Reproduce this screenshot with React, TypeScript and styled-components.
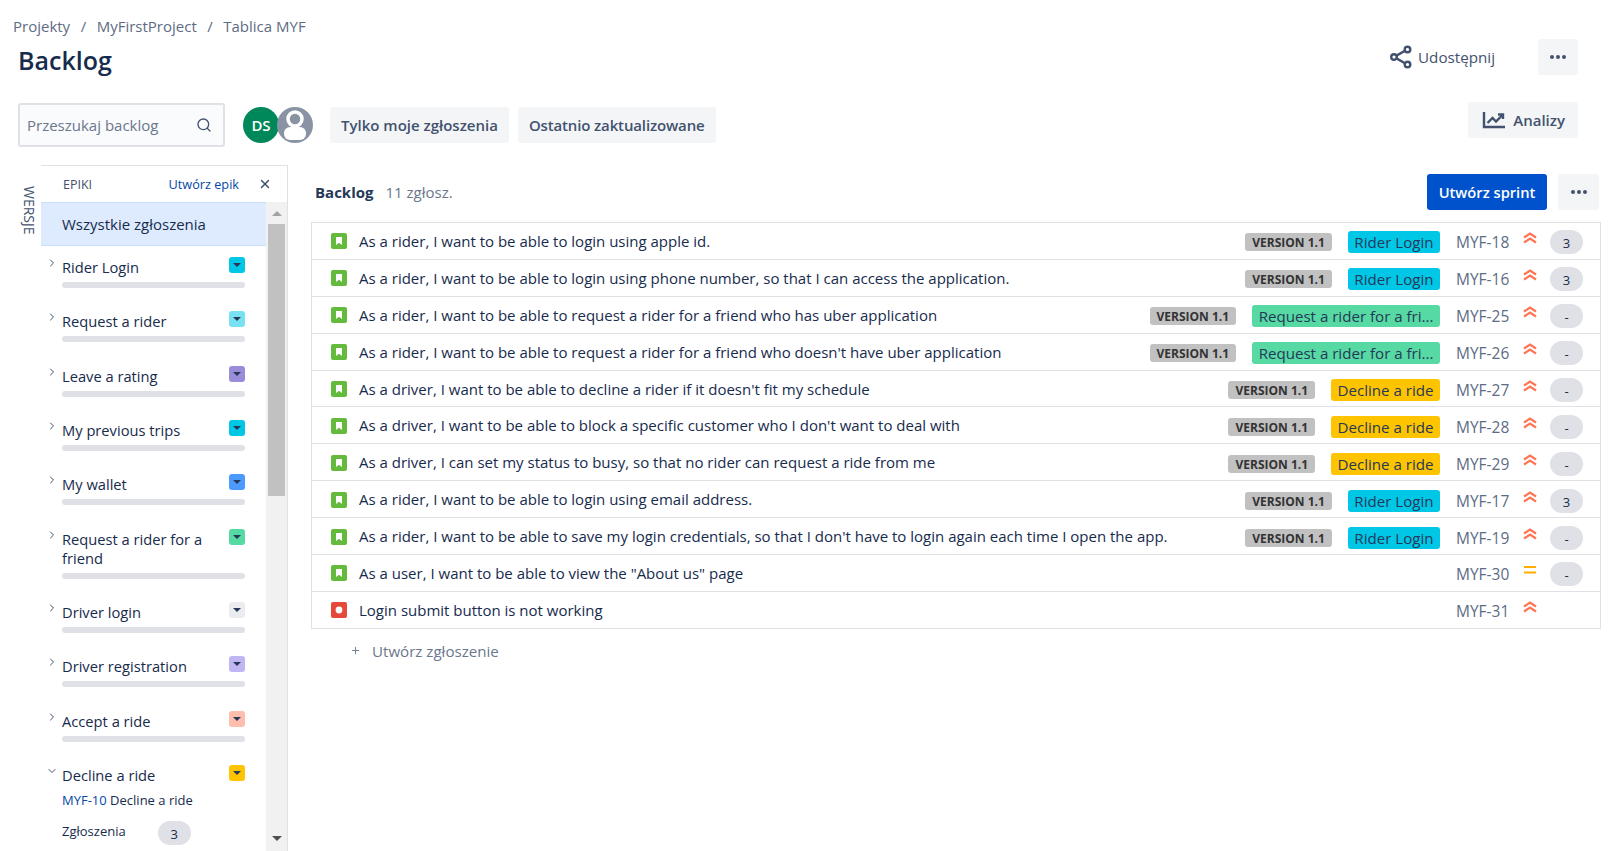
import React from "react"
import styled, { createGlobalStyle } from "styled-components"
import { Search, ChevronRight, ChevronDown, X, Plus } from "lucide-react"

const GlobalStyle = createGlobalStyle`
  html, body {
    margin: 0;
    height: 851px;
    overflow: hidden;
    background: #fff;
    font-family: "Open Sans", "Noto Sans", sans-serif;
    color: #172b4d;
  }
  * { box-sizing: border-box; }
`

const Page = styled.div`
  width: 1612px;
  height: 851px;
  overflow: hidden;
`

const TopBar = styled.header`
  display: flex;
  justify-content: space-between;
  height: 102px;
  padding: 15px 34px 0 13px;
`

const Breadcrumbs = styled.nav`
  display: flex;
  gap: 10.5px;
  font-size: 15px;
  line-height: 22px;
  color: #5e6c84;
`

const Title = styled.h1`
  margin: 7px 0 0 5px;
  font-size: 25px;
  line-height: 32px;
  font-weight: 600;
  color: #172b4d;
`

const TopActions = styled.div`
  display: flex;
  align-items: center;
  gap: 43px;
  height: 36px;
  margin-top: 24px;
`

const ShareLink = styled.span`
  display: flex;
  align-items: center;
  gap: 5px;
  font-size: 15.2px;
  font-weight: 500;
  color: #42526e;
`

const MoreButton = styled.button<{ $width: number }>`
  display: flex;
  align-items: center;
  justify-content: center;
  width: ${p => p.$width}px;
  height: 36px;
  padding: 0;
  border: 0;
  border-radius: 3px;
  background: #f4f5f7;
  color: #42526e;
`

const ToolRow = styled.div`
  display: flex;
  align-items: flex-start;
  height: 63px;
  padding: 0 34px 0 18px;
`

const SearchBox = styled.div`
  display: flex;
  align-items: center;
  justify-content: space-between;
  width: 207px;
  height: 44px;
  margin-top: 1px;
  padding: 0 11px 0 7px;
  border: 2px solid #dfe1e6;
  border-radius: 3px;
  background: #fafbfc;
  font-size: 15px;
  color: #6b778c;
`

const Avatars = styled.div`
  display: flex;
  margin: 5px 0 0 18px;
`

const Avatar = styled.div`
  display: flex;
  align-items: center;
  justify-content: center;
  width: 36px;
  height: 36px;
  border-radius: 50%;
  background: #00875a;
  color: #fff;
  font-size: 15px;
  font-weight: 600;
`

const GhostAvatar = styled.svg`
  width: 36px;
  height: 36px;
  margin-left: -2px;
`

const Filter = styled.button<{ $tight?: boolean }>`
  height: 36px;
  margin: 5px 0 0 9px;
  padding: 0 11px;
  border: 0;
  border-radius: 3px;
  background: #f4f5f7;
  font-family: inherit;
  font-size: 15px;
  font-weight: 600;
  letter-spacing: ${p => (p.$tight ? "-0.14px" : "0")};
  color: #42526e;
  &:first-of-type { margin-left: 17px; }
`

const AnalyticsButton = styled.button`
  display: flex;
  align-items: center;
  gap: 7px;
  height: 36px;
  margin-left: auto;
  padding: 0 13px 0 14px;
  border: 0;
  border-radius: 3px;
  background: #f4f5f7;
  font-family: inherit;
  font-size: 15px;
  font-weight: 600;
  color: #42526e;
`

const Main = styled.main`
  display: flex;
  height: 686px;
`

const VersionsTab = styled.div`
  width: 41px;
  padding: 21px 4px 0 0;
  writing-mode: vertical-rl;
  font-size: 14px;
  line-height: 16px;
  font-weight: 500;
  color: #42526e;
`

const EpicPanel = styled.aside`
  display: flex;
  flex-direction: column;
  width: 247px;
  border-top: 1px solid #dfe1e6;
  border-right: 1px solid #dfe1e6;
`

const EpicHeader = styled.div`
  display: flex;
  align-items: center;
  height: 36px;
  padding: 0 15px 0 22px;
  font-size: 12.5px;
  font-weight: 500;
  color: #42526e;
`

const CreateEpic = styled.span`
  margin-left: auto;
  margin-right: 19px;
  font-size: 12.7px;
  font-weight: 400;
  color: #0747a6;
`

const EpicBody = styled.div`
  display: flex;
  flex: 1;
  min-height: 0;
`

const EpicList = styled.div`
  width: 225px;
  overflow: hidden;
`

const AllIssues = styled.div`
  display: flex;
  align-items: center;
  height: 44px;
  padding-left: 21px;
  background: #deebff;
  border-top: 1px solid #c9dcf8;
  border-bottom: 1px solid #c9dcf8;
  font-size: 15px;
  color: #172b4d;
`

const EpicItem = styled.div`
  position: relative;
  padding: 11px 21px 12.33px 21px;
`

const Caret = styled.span`
  position: absolute;
  left: 5px;
  top: 6px;
  color: #42526e;
`

const EpicTop = styled.div`
  display: flex;
  justify-content: space-between;
  align-items: flex-start;
  gap: 16px;
  font-size: 14.7px;
  line-height: 19px;
`

const EpicName = styled.span`
  margin-top: 1px;
`

const Swatch = styled.span<{ $color: string }>`
  display: flex;
  flex: none;
  align-items: center;
  justify-content: center;
  width: 16px;
  height: 16px;
  border-radius: 3px;
  background: ${p => p.$color};
  &::after {
    content: "";
    border-left: 4px solid transparent;
    border-right: 4px solid transparent;
    border-top: 4px solid #253858;
  }
`

const ProgressBar = styled.div`
  height: 6px;
  margin-top: 5px;
  border-radius: 3px;
  background: #dfe1e6;
`

const EpicDetail = styled.div`
  margin-top: 5px;
  font-size: 13px;
  line-height: 20px;
  color: #172b4d;
`

const EpicKey = styled.span`
  color: #0747a6;
`

const DetailRow = styled.div`
  display: flex;
  align-items: center;
  gap: 20px;
  margin-top: 8px;
  font-size: 13px;
`

const Scrollbar = styled.div`
  display: flex;
  flex-direction: column;
  align-items: center;
  width: 21px;
  background: #f1f1f1;
`

const ScrollArrow = styled.span<{ $down?: boolean }>`
  flex: none;
  width: 0;
  margin: ${p => (p.$down ? "auto 0 10px" : "9px 0 8px")};
  border-left: 5px solid transparent;
  border-right: 5px solid transparent;
  ${p => (p.$down ? "border-top: 5px solid #505050;" : "border-bottom: 5px solid #a3a3a3;")}
`

const ScrollThumb = styled.div`
  width: 17px;
  height: 272px;
  background: #c1c1c1;
`

const Content = styled.section`
  flex: 1;
  padding: 9px 11px 0 23px;
`

const SprintHeader = styled.div`
  display: flex;
  align-items: center;
  height: 36px;
  padding: 0 2px 0 4px;
`

const SprintName = styled.strong`
  font-size: 15px;
  font-weight: 700;
  color: #253858;
`

const IssueCount = styled.span`
  margin-left: 12px;
  font-size: 15px;
  color: #6b778c;
`

const PrimaryButton = styled.button`
  width: 120px;
  height: 36px;
  margin-left: auto;
  margin-right: 11px;
  padding: 0;
  border: 0;
  border-radius: 3px;
  background: #0052cc;
  font-family: inherit;
  font-size: 14.7px;
  font-weight: 600;
  color: #fff;
`

const IssueTable = styled.div`
  margin-top: 12px;
  border: 1px solid #dfe1e6;
`

const Row = styled.div`
  display: flex;
  align-items: center;
  height: 36.9px;
  padding: 0 17px 0 19px;
  border-bottom: 1px solid #dfe1e6;
  &:last-child { border-bottom: 0; height: 36px; }
`

const TypeIcon = styled.svg`
  flex: none;
  width: 16px;
  height: 16px;
  margin-top: 1px;
`

const Summary = styled.span`
  flex: 1;
  margin: 0 0 0 12px;
  font-size: 15px;
  color: #172b4d;
  white-space: nowrap;
`

const VersionBadge = styled.span`
  flex: none;
  height: 18px;
  margin: 3px 16px 0 0;
  padding: 0 7px;
  border-radius: 3px;
  background: #c1c1c1;
  font-size: 12px;
  line-height: 19px;
  font-weight: 700;
  color: #333;
`

const EpicLabel = styled.span<{ $color: string }>`
  flex: none;
  height: 22px;
  margin-top: 3px;
  padding: 0 6.5px;
  border-radius: 3px;
  background: ${p => p.$color};
  font-size: 15.1px;
  line-height: 22px;
  color: #253858;
`

const IssueKey = styled.span`
  flex: none;
  width: 66px;
  margin: 3px 0 0 16px;
  font-size: 15.5px;
  color: #5e6c84;
`

const PrioritySlot = styled.svg`
  flex: none;
  width: 16px;
  height: 16px;
  margin-top: -5px;
`

const Points = styled.span<{ $hidden?: boolean }>`
  flex: none;
  width: 33px;
  height: 24px;
  margin: 3px 0 0 12px;
  border-radius: 12px;
  background: ${p => (p.$hidden ? "transparent" : "#dfe1e6")};
  font-size: 13px;
  line-height: 26px;
  text-align: center;
  color: #172b4d;
`

const CreateIssue = styled.div`
  display: flex;
  align-items: center;
  gap: 11px;
  margin: 12px 0 0 39px;
  font-size: 15.1px;
  color: #6b778c;
`

const Dots = () => (
  <svg width="18" height="6" viewBox="0 0 18 6" fill="currentColor">
    <circle cx="3" cy="3" r="2" />
    <circle cx="9" cy="3" r="2" />
    <circle cx="15" cy="3" r="2" />
  </svg>
)

const ShareIcon = () => (
  <svg width="24" height="24" viewBox="0 0 24 24" fill="none" stroke="currentColor" strokeWidth="2.4">
    <circle cx="18.5" cy="4.5" r="2.8" />
    <circle cx="18.5" cy="19.5" r="2.8" />
    <circle cx="5" cy="12" r="2.8" />
    <path d="M7.5 10.6 16 5.8M7.5 13.4 16 18.2" />
  </svg>
)

const ChartIcon = () => (
  <svg width="24" height="18" viewBox="0 0 24 18" fill="none" stroke="currentColor" strokeWidth="2.4">
    <path d="M2 1v15h21" />
    <path d="M5.5 12 10.5 7l3.5 3.5L20.5 4" />
    <path d="M16 3.5h5v4.5" />
  </svg>
)

const StoryIcon = () => (
  <TypeIcon viewBox="0 0 16 16">
    <rect width="16" height="16" rx="2" fill="#63ba3c" />
    <path d="M5 4h6v8L8 9.7 5 12z" fill="#fff" />
  </TypeIcon>
)

const BugIcon = () => (
  <TypeIcon viewBox="0 0 16 16">
    <rect width="16" height="16" rx="2" fill="#e5493a" />
    <circle cx="8" cy="8" r="3.4" fill="#fff" />
  </TypeIcon>
)

const HighPriority = () => (
  <PrioritySlot viewBox="0 0 16 16" fill="none" stroke="#ff7452" strokeWidth="2.2">
    <path d="M2 7.5 8 3.5l6 4M2 12.5 8 8.5l6 4" />
  </PrioritySlot>
)

const MediumPriority = () => (
  <PrioritySlot viewBox="0 0 16 16" fill="none" stroke="#ffab00" strokeWidth="2.2">
    <path d="M2 5h12M2 10.5h12" />
  </PrioritySlot>
)

const epics = [
  { name: "Rider Login", color: "#00c7e6" },
  { name: "Request a rider", color: "#79e2f2" },
  { name: "Leave a rating", color: "#998dd9" },
  { name: "My previous trips", color: "#00c7e6" },
  { name: "My wallet", color: "#4c9aff" },
  { name: "Request a rider for a friend", color: "#57d9a3" },
  { name: "Driver login", color: "#ebecf0" },
  { name: "Driver registration", color: "#c0b6f2" },
  { name: "Accept a ride", color: "#ffbdad" },
  { name: "Decline a ride", color: "#ffc400", open: true },
]

const LOGIN = { text: "Rider Login", color: "#00c7e6" }
const FRIEND = { text: "Request a rider for a fri...", color: "#57d9a3" }
const DECLINE = { text: "Decline a ride", color: "#ffc400" }

type Issue = {
  summary: string
  id: string
  epic?: { text: string; color: string }
  points?: string
  medium?: boolean
  bug?: boolean
}

const issues: Issue[] = [
  { summary: "As a rider, I want to be able to login using apple id.", id: "MYF-18", epic: LOGIN, points: "3" },
  { summary: "As a rider, I want to be able to login using phone number, so that I can access the application.", id: "MYF-16", epic: LOGIN, points: "3" },
  { summary: "As a rider, I want to be able to request a rider for a friend who has uber application", id: "MYF-25", epic: FRIEND, points: "-" },
  { summary: "As a rider, I want to be able to request a rider for a friend who doesn't have uber application", id: "MYF-26", epic: FRIEND, points: "-" },
  { summary: "As a driver, I want to be able to decline a rider if it doesn't fit my schedule", id: "MYF-27", epic: DECLINE, points: "-" },
  { summary: "As a driver, I want to be able to block a specific customer who I don't want to deal with", id: "MYF-28", epic: DECLINE, points: "-" },
  { summary: "As a driver, I can set my status to busy, so that no rider can request a ride from me", id: "MYF-29", epic: DECLINE, points: "-" },
  { summary: "As a rider, I want to be able to login using email address.", id: "MYF-17", epic: LOGIN, points: "3" },
  { summary: "As a rider, I want to be able to save my login credentials, so that I don't have to login again each time I open the app.", id: "MYF-19", epic: LOGIN, points: "-" },
  { summary: 'As a user, I want to be able to view the "About us" page', id: "MYF-30", points: "-", medium: true },
  { summary: "Login submit button is not working", id: "MYF-31", bug: true },
]

const App: React.FC = () => {
  return (
    <Page>
      <GlobalStyle />
      <TopBar>
        <div>
          <Breadcrumbs>
            <span>Projekty</span>
            <span>/</span>
            <span>MyFirstProject</span>
            <span>/</span>
            <span>Tablica MYF</span>
          </Breadcrumbs>
          <Title>Backlog</Title>
        </div>
        <TopActions>
          <ShareLink><ShareIcon />Udostępnij</ShareLink>
          <MoreButton $width={40}><Dots /></MoreButton>
        </TopActions>
      </TopBar>

      <ToolRow>
        <SearchBox>
          <span>Przeszukaj backlog</span>
          <Search size={16} color="#42526e" />
        </SearchBox>
        <Avatars>
          <Avatar>DS</Avatar>
          <GhostAvatar viewBox="0 0 36 36">
            <clipPath id="ghost-clip"><circle cx="18" cy="18" r="18" /></clipPath>
            <circle cx="18" cy="18" r="18" fill="#8993a4" />
            <circle cx="18" cy="12" r="7" fill="none" stroke="#fff" strokeWidth="3.5" />
            <rect x="7" y="20" width="22" height="13" rx="6" fill="#fff" clipPath="url(#ghost-clip)" />
          </GhostAvatar>
        </Avatars>
        <Filter>Tylko moje zgłoszenia</Filter>
        <Filter $tight>Ostatnio zaktualizowane</Filter>
        <AnalyticsButton><ChartIcon />Analizy</AnalyticsButton>
      </ToolRow>

      <Main>
        <VersionsTab>WERSJE</VersionsTab>
        <EpicPanel>
          <EpicHeader>
            EPIKI
            <CreateEpic>Utwórz epik</CreateEpic>
            <X size={14} strokeWidth={2.5} color="#42526e" />
          </EpicHeader>
          <EpicBody>
            <EpicList>
              <AllIssues>Wszystkie zgłoszenia</AllIssues>
              {epics.map(epic => (
                <EpicItem key={epic.name}>
                  <Caret>
                    {epic.open ? <ChevronDown size={12} /> : <ChevronRight size={12} />}
                  </Caret>
                  <EpicTop>
                    <EpicName>{epic.name}</EpicName>
                    <Swatch $color={epic.color} />
                  </EpicTop>
                  {epic.open ? (
                    <>
                      <EpicDetail><EpicKey>MYF-10</EpicKey> Decline a ride</EpicDetail>
                      <DetailRow>
                        <span>Zgłoszenia</span>
                        <Points>3</Points>
                      </DetailRow>
                    </>
                  ) : (
                    <ProgressBar />
                  )}
                </EpicItem>
              ))}
            </EpicList>
            <Scrollbar>
              <ScrollArrow />
              <ScrollThumb />
              <ScrollArrow $down />
            </Scrollbar>
          </EpicBody>
        </EpicPanel>

        <Content>
          <SprintHeader>
            <SprintName>Backlog</SprintName>
            <IssueCount>11 zgłosz.</IssueCount>
            <PrimaryButton>Utwórz sprint</PrimaryButton>
            <MoreButton $width={41}><Dots /></MoreButton>
          </SprintHeader>
          <IssueTable>
            {issues.map(issue => (
              <Row key={issue.id}>
                {issue.bug ? <BugIcon /> : <StoryIcon />}
                <Summary>{issue.summary}</Summary>
                {issue.epic && <VersionBadge>VERSION 1.1</VersionBadge>}
                {issue.epic && <EpicLabel $color={issue.epic.color}>{issue.epic.text}</EpicLabel>}
                <IssueKey>{issue.id}</IssueKey>
                {issue.medium ? <MediumPriority /> : <HighPriority />}
                <Points $hidden={!issue.points}>{issue.points}</Points>
              </Row>
            ))}
          </IssueTable>
          <CreateIssue><Plus size={11} />Utwórz zgłoszenie</CreateIssue>
        </Content>
      </Main>
    </Page>
  )
}

export default App
